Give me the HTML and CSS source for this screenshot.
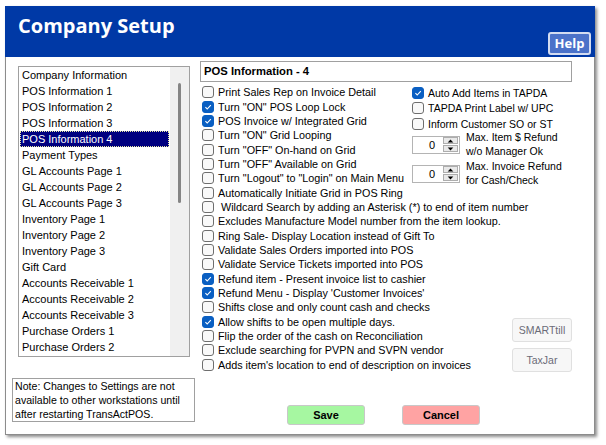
FILE: index.html
```html
<!DOCTYPE html>
<html lang="en">
<head>
<meta charset="utf-8">
<title>Company Setup</title>
<link rel="stylesheet" href="styles.css">
</head>
<body>
<div class="window">
  <header class="header">
    <h1 class="title">Company Setup</h1>
    <button class="help">Help</button>
  </header>
  <div class="main">
    <aside class="left">
      <div class="listbox">
        <ul class="list">
          <li>Company Information</li>
          <li>POS Information 1</li>
          <li>POS Information 2</li>
          <li>POS Information 3</li>
          <li class="selected">POS Information 4</li>
          <li>Payment Types</li>
          <li>GL Accounts Page 1</li>
          <li>GL Accounts Page 2</li>
          <li>GL Accounts Page 3</li>
          <li>Inventory Page 1</li>
          <li>Inventory Page 2</li>
          <li>Inventory Page 3</li>
          <li>Gift Card</li>
          <li>Accounts Receivable 1</li>
          <li>Accounts Receivable 2</li>
          <li>Accounts Receivable 3</li>
          <li>Purchase Orders 1</li>
          <li>Purchase Orders 2</li>
        </ul>
        <div class="scrollbar"><div class="thumb"></div></div>
      </div>
      <div class="note">Note: Changes to Settings are not<br>available to other workstations until<br>after restarting TransActPOS.</div>
    </aside>
    <section class="right">
      <div class="panel-title">POS Information - 4</div>
      <div class="options">
        <div class="lcol">
          <label class="row"><span class="cb"></span>Print Sales Rep on Invoice Detail</label>
          <label class="row"><span class="cb checked"><svg viewBox="0 0 10 10"><path d="M2.4 5.2 L4.2 7 L7.8 3.1"/></svg></span>Turn "ON" POS Loop Lock</label>
          <label class="row"><span class="cb checked"><svg viewBox="0 0 10 10"><path d="M2.4 5.2 L4.2 7 L7.8 3.1"/></svg></span>POS Invoice w/ Integrated Grid</label>
          <label class="row"><span class="cb"></span>Turn "ON" Grid Looping</label>
          <label class="row"><span class="cb"></span>Turn "OFF" On-hand on Grid</label>
          <label class="row"><span class="cb"></span>Turn "OFF" Available on Grid</label>
          <label class="row clip"><span class="cb"></span>Turn "Logout" to "Login" on Main Menu</label>
          <label class="row"><span class="cb"></span>Automatically Initiate Grid in POS Ring</label>
          <label class="row"><span class="cb"></span>&nbsp;Wildcard Search by adding an Asterisk (*) to end of item number</label>
          <label class="row"><span class="cb"></span>Excludes Manufacture Model number from the item lookup.</label>
          <label class="row"><span class="cb"></span>Ring Sale- Display Location instead of Gift To</label>
          <label class="row"><span class="cb"></span>Validate Sales Orders imported into POS</label>
          <label class="row"><span class="cb"></span>Validate Service Tickets imported into POS</label>
          <label class="row"><span class="cb checked"><svg viewBox="0 0 10 10"><path d="M2.4 5.2 L4.2 7 L7.8 3.1"/></svg></span>Refund item - Present invoice list to cashier</label>
          <label class="row"><span class="cb checked"><svg viewBox="0 0 10 10"><path d="M2.4 5.2 L4.2 7 L7.8 3.1"/></svg></span>Refund Menu - Display 'Customer Invoices'</label>
          <label class="row"><span class="cb"></span>Shifts close and only count cash and checks</label>
          <label class="row"><span class="cb checked"><svg viewBox="0 0 10 10"><path d="M2.4 5.2 L4.2 7 L7.8 3.1"/></svg></span>Allow shifts to be open multiple days.</label>
          <label class="row"><span class="cb"></span>Flip the order of the cash on Reconciliation</label>
          <label class="row"><span class="cb"></span>Exclude searching for PVPN and SVPN vendor</label>
          <label class="row"><span class="cb"></span>Adds item's location to end of description on invoices</label>
        </div>
        <div class="rcol">
          <label class="row"><span class="cb checked"><svg viewBox="0 0 10 10"><path d="M2.4 5.2 L4.2 7 L7.8 3.1"/></svg></span>Auto Add Items in TAPDA</label>
          <label class="row"><span class="cb"></span>TAPDA Print Label w/ UPC</label>
          <label class="row row-gap"><span class="cb"></span>Inform Customer SO or ST</label>
          <div class="spin-row">
            <div class="spinner">
              <span class="spin-value">0</span>
              <span class="spin-btns">
                <span class="spin-btn"><svg viewBox="0 0 8 5"><path d="M4 0.5 L7.5 4.5 L0.5 4.5 Z"/></svg></span>
                <span class="spin-btn"><svg viewBox="0 0 8 5"><path d="M0.5 0.5 L7.5 0.5 L4 4.5 Z"/></svg></span>
              </span>
            </div>
            <div class="spin-label">Max. Item $ Refund<br>w/o Manager Ok</div>
          </div>
          <div class="spin-row second">
            <div class="spinner">
              <span class="spin-value">0</span>
              <span class="spin-btns">
                <span class="spin-btn"><svg viewBox="0 0 8 5"><path d="M4 0.5 L7.5 4.5 L0.5 4.5 Z"/></svg></span>
                <span class="spin-btn"><svg viewBox="0 0 8 5"><path d="M0.5 0.5 L7.5 0.5 L4 4.5 Z"/></svg></span>
              </span>
            </div>
            <div class="spin-label">Max. Invoice Refund<br>for Cash/Check</div>
          </div>
          <button class="side-btn first">SMARTtill</button>
          <button class="side-btn">TaxJar</button>
        </div>
      </div>
      <div class="actions">
        <button class="btn save">Save</button>
        <button class="btn cancel">Cancel</button>
      </div>
    </section>
  </div>
</div>
</body>
</html>
```
FILE: styles.css
```css
* { box-sizing: border-box; }

html, body {
  margin: 0;
  padding: 0;
  background: #ffffff;
}

body {
  font-family: "Liberation Sans", Arial, sans-serif;
  color: #000;
  width: 606px;
  height: 445px;
  overflow: hidden;
}

.window {
  margin: 6px 0 0 5px;
  width: 590px;
  height: 429px;
  border: 1px solid #8c8c8c;
  border-top: none;
  background: #fff;
  box-shadow: 2px 2px 3px rgba(0, 0, 0, 0.45);
}

.header {
  height: 51px;
  background: #0039a6;
  display: flex;
  justify-content: space-between;
  align-items: flex-start;
  margin: 0 -1px;
}

.title {
  margin: 0;
  padding: 6px 0 0 13px;
  font-family: "Open Sans", "Liberation Sans", sans-serif;
  font-weight: 700;
  font-size: 20px;
  line-height: 28px;
  color: #fff;
}

.help {
  margin: 26px 4px 0 0;
  width: 43px;
  height: 23px;
  padding: 0;
  background: #4b72c9;
  border: 2px solid #d3dcf1;
  border-radius: 3px;
  color: #fff;
  font-family: "Open Sans", "Liberation Sans", sans-serif;
  font-weight: 700;
  font-size: 13px;
  line-height: 17px;
}

.main {
  display: flex;
}

.left {
  width: 190px;
  flex: none;
}

.listbox {
  margin: 9px 0 0 12px;
  width: 172px;
  height: 291px;
  border: 1px solid #a0a0a0;
  display: flex;
}

.list {
  list-style: none;
  margin: 0;
  padding: 0;
  flex: 1;
  font-size: 11px;
}

.list li {
  height: 16px;
  line-height: 16px;
  padding-left: 3px;
  margin-right: 1px;
  white-space: nowrap;
}

.list li.selected {
  background: #000080;
  color: #fff;
  outline: 1px dotted #e8e8a0;
  outline-offset: -1px;
  margin-left: 1px;
  padding-left: 2px;
}

.scrollbar {
  width: 19px;
  background: #f0f0f0;
  flex: none;
}

.thumb {
  margin: 16px 0 0 8px;
  width: 3px;
  height: 120px;
  border-radius: 2px;
  background: #858585;
}

.note {
  margin: 21px 0 0 6px;
  width: 183px;
  height: 44px;
  border: 1px solid #a0a0a0;
  padding: 0 0 0 2px;
  font-size: 10.6px;
  line-height: 14px;
  white-space: nowrap;
}

.right {
  flex: 1;
  padding-top: 4px;
}

.panel-title {
  margin-left: 4px;
  width: 372px;
  height: 21px;
  border: 1px solid #a0a0a0;
  padding-left: 3px;
  font-weight: 700;
  font-size: 11.25px;
  line-height: 19px;
}

.options {
  display: grid;
  grid-template-columns: 210px 160px;
  margin: 3px 0 0 6px;
}

.row {
  display: flex;
  align-items: center;
  height: 14.35px;
  font-size: 10.8px;
  white-space: nowrap;
}

.rcol .row {
  font-size: 10.5px;
}

.row.clip {
  width: 208px;
  overflow: hidden;
}

.row-gap {
  margin-top: 2px;
}

.cb {
  flex: none;
  width: 12px;
  height: 12px;
  margin-right: 4px;
  border: 1px solid #6e6e6e;
  border-radius: 3px;
  background: #f9f9f9;
  display: flex;
  align-items: center;
  justify-content: center;
}

.cb.checked {
  background: #0a5fc2;
  border-color: #0a5fc2;
}

.cb svg {
  width: 10px;
  height: 10px;
  fill: none;
  stroke: #fff;
  stroke-width: 1.1;
}

.rcol {
  padding-top: 1px;
  display: flex;
  flex-direction: column;
}

.spin-row {
  display: flex;
  align-items: center;
  gap: 6px;
  height: 27px;
}

.spin-row.second {
  margin-top: 2px;
}

.spinner {
  width: 48px;
  height: 18px;
  border: 1px solid #b4b4b4;
  display: flex;
  align-items: center;
  justify-content: flex-end;
  padding-right: 1px;
}

.spin-value {
  font-size: 11px;
  margin-right: 8px;
}

.spin-btns {
  display: flex;
  flex-direction: column;
  gap: 1px;
}

.spin-btn {
  width: 15px;
  height: 7px;
  background: #e9e9e9;
  border: 1px solid #adadad;
  display: flex;
  align-items: center;
  justify-content: center;
}

.spin-btn svg {
  width: 7px;
  height: 4px;
  fill: #000;
}

.spin-label {
  font-size: 10.5px;
  line-height: 13.5px;
  white-space: nowrap;
}

.side-btn {
  align-self: flex-end;
  width: 60px;
  height: 24px;
  margin-right: 0;
  padding: 0;
  background: #f7f7f7;
  border: 1px solid #e0e0e0;
  border-radius: 3px;
  color: #6b6b78;
  font-family: "Liberation Sans", Arial, sans-serif;
  font-size: 10.5px;
  margin-top: 6px;
}

.side-btn.first {
  margin-top: 131px;
}

.actions {
  display: flex;
  gap: 37px;
  margin-top: 33px;
  padding-left: 91px;
}

.btn {
  width: 78px;
  height: 20px;
  padding: 0;
  border: 1px solid #c8c8c8;
  border-radius: 3px;
  font-family: "Liberation Sans", Arial, sans-serif;
  font-weight: 700;
  font-size: 11px;
  color: #000;
}

.save { background: #a6f7a1; }
.cancel { background: #ffa3a3; }
```
